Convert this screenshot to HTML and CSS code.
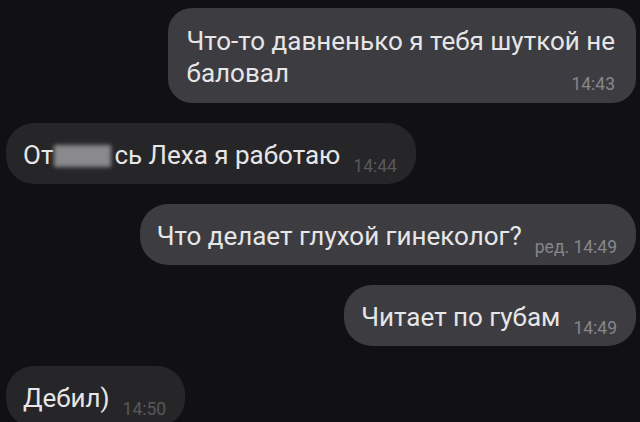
FILE: index.html
```html
<!DOCTYPE html>
<html lang="ru">
<head>
<meta charset="utf-8">
<link rel="stylesheet" href="styles.css">
</head>
<body>
<div class="chat">
  <div class="bubble out multi">
    <div class="text">Что-то давненько я тебя шуткой не<br>баловал</div>
    <span class="time">14:43</span>
  </div>
  <div class="bubble in">
    <div class="text">От<span class="blur"></span>сь Леха я работаю</div>
    <span class="time">14:44</span>
  </div>
  <div class="bubble out">
    <div class="text">Что делает глухой гинеколог?</div>
    <span class="time">ред. 14:49</span>
  </div>
  <div class="bubble out">
    <div class="text">Читает по губам</div>
    <span class="time">14:49</span>
  </div>
  <div class="bubble in">
    <div class="text">Дебил)</div>
    <span class="time">14:50</span>
  </div>
</div>
</body>
</html>
```

FILE: styles.css
```css
html, body {
  margin: 0;
  padding: 0;
  background: #111113;
  height: 100%;
  overflow: hidden;
}

.chat {
  display: flex;
  flex-direction: column;
  gap: 20px;
  padding: 8px 4px 0 6px;
  font-family: Roboto, "Noto Sans", sans-serif;
}

.bubble {
  display: flex;
  align-items: flex-end;
  padding: 16px 19px 13px 17px;
  border-radius: 28px;
  color: #e6e6e8;
}

.bubble.out {
  align-self: flex-end;
  background: #3d3d41;
}

.bubble.in {
  align-self: flex-start;
  background: #262628;
}

.text {
  font-size: 26px;
  line-height: 32px;
  white-space: nowrap;
}

.time {
  font-size: 17.5px;
  line-height: 10px;
  margin-left: 13px;
  white-space: nowrap;
}

.out .time {
  color: #86868b;
}

.in .time {
  color: #58585c;
}

.bubble.multi {
  display: grid;
  padding: 17px 21px 14px 19px;
  border-radius: 24px;
}

.multi .text,
.multi .time {
  grid-area: 1 / 1;
}

.multi .time {
  justify-self: end;
  align-self: end;
  margin-left: 0;
}

.blur {
  display: inline-block;
  width: 57px;
  height: 22px;
  margin: 0 3px 0 1px;
  vertical-align: -3px;
  background: #8a8a8c;
  filter: blur(2px);
}
```
